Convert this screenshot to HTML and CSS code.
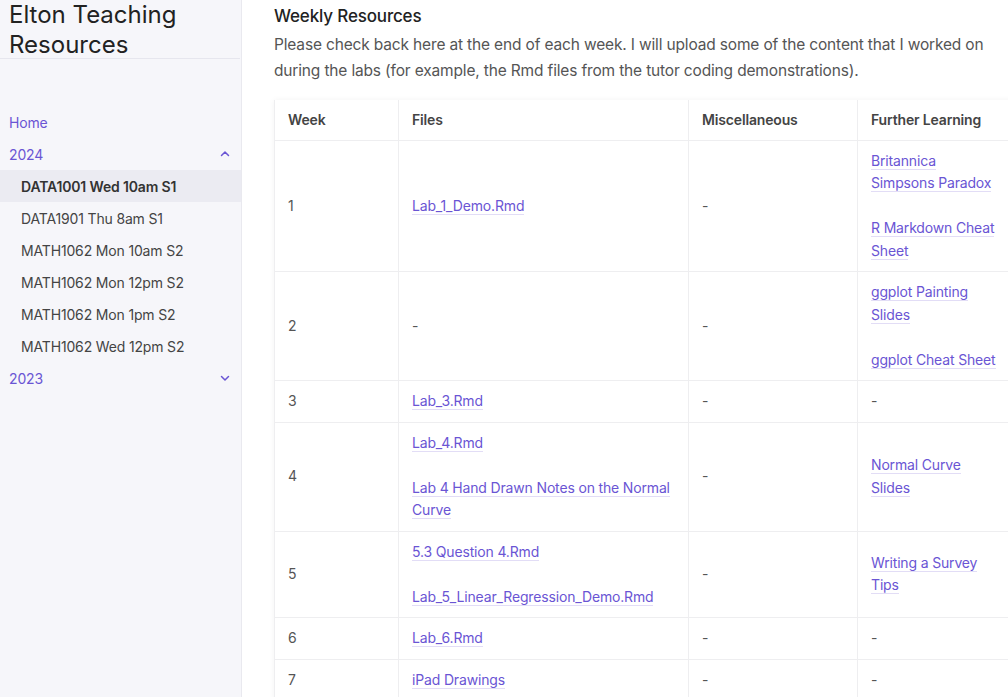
FILE: index.html
```html
<!DOCTYPE html>
<html lang="en">
<head>
    <meta charset="UTF-8">
    <meta name="viewport" content="width=device-width, initial-scale=1.0">
    <title>Elton Teaching Resources</title>
    <link rel="stylesheet" href="styles.css">
</head>
<body>
    <div class="layout">
        <aside class="sidebar">
            <div class="site-title">Elton Teaching Resources</div>
            <nav class="nav">
                <a class="nav-link" href="#">Home</a>
                <div class="nav-group">
                    <span>2024</span>
                    <svg class="chevron" viewBox="0 0 12 12" width="12" height="12"><polyline points="2.5,7.5 6,4 9.5,7.5" /></svg>
                </div>
                <a class="nav-item active" href="#">DATA1001 Wed 10am S1</a>
                <a class="nav-item" href="#">DATA1901 Thu 8am S1</a>
                <a class="nav-item" href="#">MATH1062 Mon 10am S2</a>
                <a class="nav-item" href="#">MATH1062 Mon 12pm S2</a>
                <a class="nav-item" href="#">MATH1062 Mon 1pm S2</a>
                <a class="nav-item" href="#">MATH1062 Wed 12pm S2</a>
                <div class="nav-group">
                    <span>2023</span>
                    <svg class="chevron" viewBox="0 0 12 12" width="12" height="12"><polyline points="2.5,4.5 6,8 9.5,4.5" /></svg>
                </div>
            </nav>
        </aside>

        <main class="content">
            <h2>Weekly Resources</h2>
            <p class="intro">Please check back here at the end of each week. I will upload some of the content that I worked on during the labs (for example, the Rmd files from the tutor coding demonstrations).</p>

            <table class="resources">
                <colgroup>
                    <col class="col-week">
                    <col class="col-files">
                    <col class="col-misc">
                    <col class="col-further">
                </colgroup>
                <thead>
                    <tr>
                        <th>Week</th>
                        <th>Files</th>
                        <th>Miscellaneous</th>
                        <th>Further Learning</th>
                    </tr>
                </thead>
                <tbody>
                    <tr>
                        <td>1</td>
                        <td><a href="#">Lab_1_Demo.Rmd</a></td>
                        <td>-</td>
                        <td><a href="#">Britannica Simpsons Paradox</a><br><br><a href="#">R Markdown Cheat Sheet</a></td>
                    </tr>
                    <tr>
                        <td>2</td>
                        <td>-</td>
                        <td>-</td>
                        <td><a href="#">ggplot Painting Slides</a><br><br><a href="#">ggplot Cheat Sheet</a></td>
                    </tr>
                    <tr>
                        <td>3</td>
                        <td><a href="#">Lab_3.Rmd</a></td>
                        <td>-</td>
                        <td>-</td>
                    </tr>
                    <tr>
                        <td>4</td>
                        <td><a href="#">Lab_4.Rmd</a><br><br><a href="#">Lab 4 Hand Drawn Notes on the Normal Curve</a></td>
                        <td>-</td>
                        <td><a href="#">Normal Curve Slides</a></td>
                    </tr>
                    <tr>
                        <td>5</td>
                        <td><a href="#">5.3 Question 4.Rmd</a><br><br><a href="#">Lab_5_Linear_Regression_Demo.Rmd</a></td>
                        <td>-</td>
                        <td><a href="#">Writing a Survey Tips</a></td>
                    </tr>
                    <tr>
                        <td>6</td>
                        <td><a href="#">Lab_6.Rmd</a></td>
                        <td>-</td>
                        <td>-</td>
                    </tr>
                    <tr>
                        <td>7</td>
                        <td><a href="#">iPad Drawings</a></td>
                        <td>-</td>
                        <td>-</td>
                    </tr>
                </tbody>
            </table>
        </main>
    </div>
</body>
</html>
```

FILE: styles.css
```css
body {
    margin: 0;
    font-family: Inter, "Noto Sans", sans-serif;
    letter-spacing: -0.01em;
    color: #222;
    background-color: #fff;
    overflow: hidden;
}

a {
    text-decoration: none;
}

.layout {
    display: flex;
    height: 100vh;
}

/* Sidebar */

.sidebar {
    width: 241px;
    flex-shrink: 0;
    background-color: #f6f6fa;
    border-right: 1px solid #e9e9ef;
}

.site-title {
    height: 58px;
    font-size: 24px;
    line-height: 30px;
    letter-spacing: 0;
    padding: 0 20px 0 9px;
    margin-right: 1px;
    border-bottom: 1px solid #e6e6ee;
    color: #222;
}

.nav {
    display: flex;
    flex-direction: column;
    margin-top: 47px;
    font-size: 14px;
}

.nav-link,
.nav-group {
    display: flex;
    align-items: center;
    justify-content: space-between;
    height: 32px;
    padding: 0 10px 0 9px;
    color: #6a55d4;
}

.chevron {
    fill: none;
    stroke: #6a55d4;
    stroke-width: 1.5;
    stroke-linecap: round;
    stroke-linejoin: round;
}

.nav-item {
    display: flex;
    align-items: center;
    height: 32px;
    padding-left: 21px;
    color: #444;
}

.nav-item.active {
    background-color: #ebebf2;
    font-weight: 600;
    color: #333;
}

/* Main content */

.content {
    flex: 1;
    min-width: 0;
    overflow: hidden;
    padding-left: 32px;
}

.content h2 {
    margin: 4px 0 0;
    font-size: 17px;
    font-weight: 500;
    line-height: 24px;
    color: #222;
}

.intro {
    margin: 4px 0 16px;
    max-width: 730px;
    font-size: 15.5px;
    line-height: 26px;
    color: #555;
}

.resources {
    border-collapse: collapse;
    table-layout: fixed;
    width: 740px;
    font-size: 14px;
    line-height: 22.5px;
    color: #555;
    box-shadow: 0 0 6px rgba(0, 0, 0, 0.05);
}

.col-week { width: 124px; }
.col-files { width: 290px; }
.col-misc { width: 169px; }
.col-further { width: 157px; }

.resources th,
.resources td {
    border: 1px solid #eeeef0;
    padding: 9px 13px;
    text-align: left;
    vertical-align: middle;
}

.resources th {
    padding: 8.5px 13px;
    font-weight: 600;
    color: #444;
}

.resources tr:first-child th {
    border-top: none;
}

.resources a {
    color: #6a55d4;
    border-bottom: 1px solid #e2ddf6;
}
```
